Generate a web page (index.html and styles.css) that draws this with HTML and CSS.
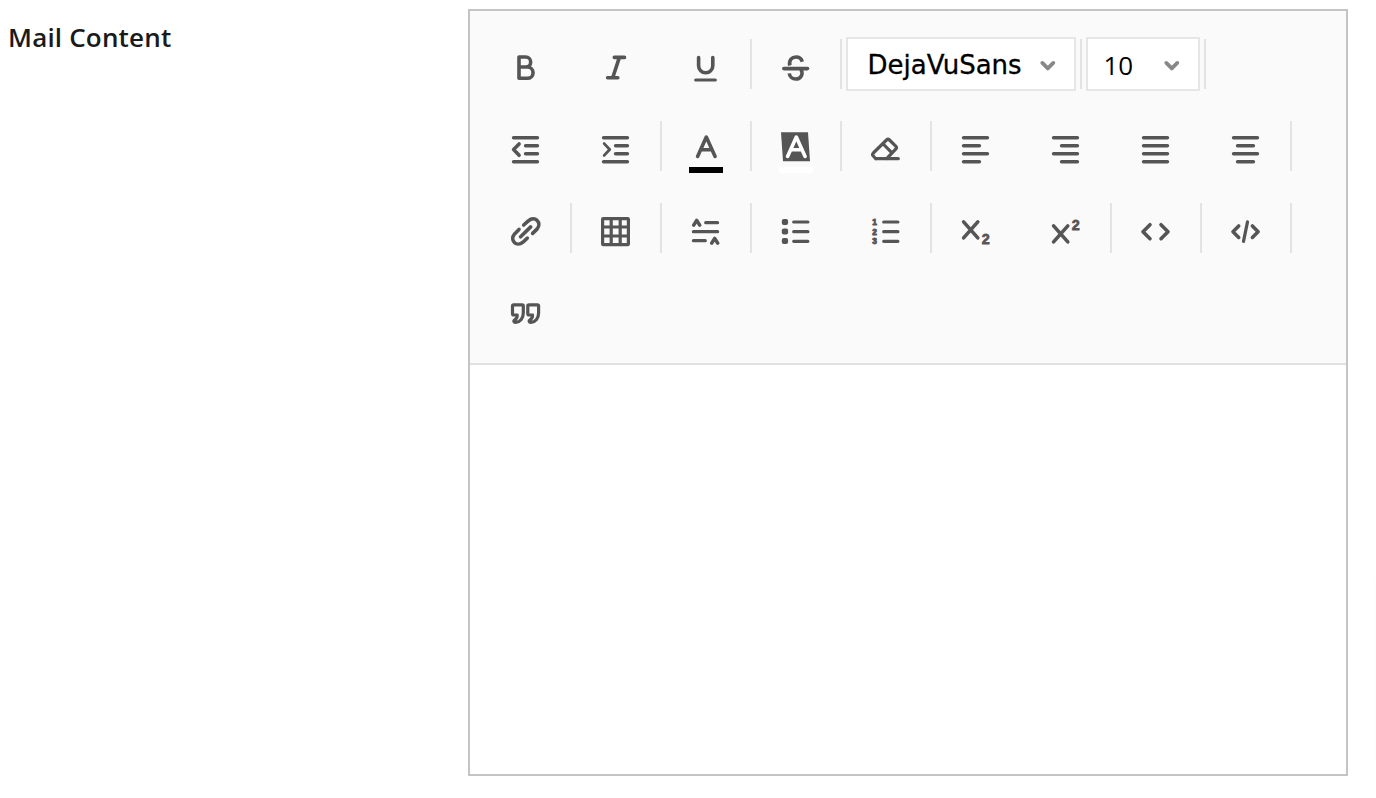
FILE: index.html
```html
<!DOCTYPE html>
<html lang="en">
<head>
<meta charset="utf-8">
<title>Mail Content</title>
<link rel="stylesheet" href="styles.css">
</head>
<body>
<main class="field">
  <label class="field-label">Mail Content</label>
  <section class="editor">
    <div class="toolbar">
      <div class="row">
        <button class="tool"><svg class="icon" viewBox="0 0 40 40"><path d="M14 23h6.7a5 5 0 0 0 0-10H14v21.3h8.4a5.65 5.65 0 0 0 0-11.3"/></svg></button>
        <button class="tool"><svg class="icon" viewBox="0 0 40 40"><path d="M19.3 13.4h10.2M12.6 33.7h10.2M24.4 13.4l-6.7 20.3"/></svg></button>
        <button class="tool"><svg class="icon" viewBox="0 0 40 40"><path d="M13.6 13.5v8.2a7.1 7.1 0 0 0 14.2 0v-8.2"/><path class="thin" d="M10.7 36h19.6"/></svg></button>
        <button class="tool split"><svg class="icon" viewBox="0 0 40 40"><path class="butt" d="M14.800 21.500c-1.200-5.600 2.200-8.500 6.200-8.500 3 0 5.400 1.600 6.300 4.700M25.800 25c3 5.400-.2 10-5 10-3.600 0-6.200-2.200-6.500-5.600"/><path d="M8.800 24.600h23.700"/></svg></button>
        <div class="pick-group split">
          <div class="pick pick-font"><span>DejaVuSans</span><svg class="chevron" viewBox="0 0 16 10"><path d="M2.300 1.900l5.500 5.500 5.500-5.500"/></svg></div>
        </div>
        <div class="pick-group split">
          <div class="pick pick-size"><span>10</span><svg class="chevron" viewBox="0 0 16 10"><path d="M2.300 1.900l5.500 5.500 5.500-5.500"/></svg></div>
        </div>
        <span class="split"></span>
      </div>
      <div class="row">
        <button class="tool"><svg class="icon" viewBox="0 0 40 40"><path d="M8.600 11.700h23.800M20.600 19.700h11.800M20.600 27.700h11.800M8.600 35.700h23.800M14.100 18l-5.500 5.500 5.500 5.800"/></svg></button>
        <button class="tool"><svg class="icon" viewBox="0 0 40 40"><path d="M8.600 11.700h23.800M20.600 19.700h11.800M20.600 27.700h11.800M8.600 35.700h23.800"/><path class="fine" d="M9.200 17.600l5.500 5.900-5.500 5.900"/></svg></button>
        <button class="tool split"><svg class="icon" viewBox="0 0 40 40"><path d="M12.600 30.400l8.700-19.300 8.800 19.300M15.600 23.700h11.500"/><path class="swatch-black" d="M4 41h34v6H4z"/></svg></button>
        <button class="tool split"><svg class="icon" viewBox="0 0 40 40"><path class="solid" d="M6 6.300h27l2 29H8z"/><path class="letter-white" d="M12.600 30.400l8.700-19.300 8.800 19.300M15.600 23.700h11.500"/><path class="swatch-white" d="M4 41h34v6H4z"/></svg></button>
        <button class="tool split"><svg class="icon" viewBox="0 0 40 40"><path class="thin" d="M10.700 32.700h22.600M10.700 32.700l-2.400-2.700q-1.400-1.500 0-3L21.500 14q1.500-1.400 3 0l6.200 6.200q1.500 1.500 0 3L21.700 32.700M18.200 18l8.500 8.700"/></svg></button>
        <button class="tool split"><svg class="icon" viewBox="0 0 40 40"><path d="M8.600 11.700h23.800M8.600 19.700h15.800M8.600 27.700h23.800M8.600 35.700h15.800"/></svg></button>
        <button class="tool"><svg class="icon" viewBox="0 0 40 40"><path d="M8.600 11.700h23.800M16.600 19.700h15.800M8.600 27.700h23.800M16.600 35.700h15.800"/></svg></button>
        <button class="tool"><svg class="icon" viewBox="0 0 40 40"><path d="M8.600 11.700h23.800M8.600 19.700h23.800M8.600 27.700h23.800M8.600 35.700h23.800"/></svg></button>
        <button class="tool"><svg class="icon" viewBox="0 0 40 40"><path d="M8.600 11.700h23.800M12.600 19.700h15.800M8.600 27.700h23.800M12.600 35.700h15.800"/></svg></button>
        <span class="split"></span>
      </div>
      <div class="row">
        <button class="tool"><svg class="icon" viewBox="0 0 40 40"><path d="M18.700 17l4.600-4.200c6.800-5.600 14 2 8.700 8.300L27.600 25.400M15.600 28.800L25.700 18.900M14 21.400l-4.400 4.500c-5.400 6.300 2 13.700 8.300 8.300l4.400-4.100"/></svg></button>
        <button class="tool split"><svg class="icon" viewBox="0 0 40 40"><path class="thin" d="M8.200 10.700h24.600q.6 0 .6.600v24.700q0 .6-.6.600H8.200q-.6 0-.6-.6V11.300q0-.6.600-.6zM16.200 11v25.500M25.200 11v25.500M8 19h25M8 28h25"/></svg></button>
        <button class="tool split"><svg class="icon" viewBox="0 0 40 40"><path class="thin" d="M20.700 14.700h11.900M8.400 23.700h24.200M8.400 32.700h11.900"/><path d="M8.700 17.100l3-4.700 3 4.700M26.700 35.100l3-4.700 3 4.700"/></svg></button>
        <button class="tool split"><svg class="icon" viewBox="0 0 40 40"><path class="thin" d="M18.700 14h14.200M18.700 23.700h14.200M18.700 33.300h14.200"/><g class="solid"><rect x="6.800" y="10.900" width="6.300" height="6" rx="2"/><rect x="6.800" y="20.500" width="6.300" height="6" rx="2"/><rect x="6.800" y="30.100" width="6.300" height="6" rx="2"/></g></svg></button>
        <button class="tool"><svg class="icon" viewBox="0 0 40 40"><path class="thin" d="M18.700 14h14.200M18.700 23.700h14.200M18.700 33.300h14.200"/><text class="list-digit" x="7.300" y="16.700">1</text><text class="list-digit" x="7.300" y="26.600">2</text><text class="list-digit" x="7.300" y="36.200">3</text></svg></button>
        <button class="tool split"><svg class="icon" viewBox="0 0 40 40"><path d="M8.600 13.900l14.200 16M22.800 13.900l-14.200 16"/><text class="script-digit" x="26.700" y="36" textLength="8" lengthAdjust="spacingAndGlyphs">2</text></svg></button>
        <button class="tool"><svg class="icon" viewBox="0 0 40 40"><path d="M8.600 17.900l14.200 16M22.800 17.900l-14.200 16"/><text class="script-digit" x="26.700" y="21.800" textLength="8" lengthAdjust="spacingAndGlyphs">2</text></svg></button>
        <button class="tool split"><svg class="icon" viewBox="0 0 40 40"><path d="M15 16.700l-7 7 7 7M26 16.700l7 7-7 7"/></svg></button>
        <button class="tool split"><svg class="icon" viewBox="0 0 40 40"><path d="M13.700 18l-5.700 5.700 5.700 5.700M27.400 18l5.700 5.700-5.700 5.700"/><path class="thin" d="M22.500 13.900l-4 19.500"/></svg></button>
        <span class="split"></span>
      </div>
      <div class="row">
        <button class="tool"><svg class="icon" viewBox="0 0 40 40"><path class="thin" d="M8.700 14.800h8.400q1.200 0 1.200 1.200v7c0 5-3 9-7.600 9.300-2.200 0-2.400-1.500-1-2.300 1.900-1.100 2.700-2.700 2.500-5H8.700q-1.200 0-1.200-1.200V16q0-1.200 1.200-1.200z"/><path class="thin" d="M24 14.800h8.400q1.200 0 1.200 1.200v7c0 5-3 9-7.600 9.300-2.200 0-2.400-1.500-1-2.300 1.900-1.100 2.700-2.700 2.500-5H24q-1.200 0-1.200-1.200V16q0-1.200 1.200-1.200z"/></svg></button>
      </div>
    </div>
    <div class="content" contenteditable="true"></div>
  </section>
  <div class="edge"></div>
</main>
</body>
</html>
```
FILE: styles.css
```css
* { box-sizing: border-box; }
body {
  margin: 0;
  background: #fff;
  font-family: "Open Sans", "Noto Sans", sans-serif;
  overflow: hidden;
}
.field {
  display: flex;
  width: 1376px;
  height: 798px;
  padding-top: 9px;
}
.field-label {
  flex: 0 0 468px;
  padding: 10px 0 0 8px;
  font-size: 26px;
  line-height: 36px;
  font-weight: 600;
  letter-spacing: .18px;
  color: #1a1a1a;
}
.editor {
  display: flex;
  flex-direction: column;
  flex: 0 0 880px;
  height: 767px;
  border: 2px solid #c4c4c4;
}
.toolbar {
  display: flex;
  flex-direction: column;
  gap: 32px;
  padding: 28px 10px;
  background: #fafafa;
  border-bottom: 2px solid #e1e1e1;
}
.row {
  display: flex;
  align-items: center;
  height: 50px;
}
.content { flex: 1; }
.tool {
  display: flex;
  justify-content: center;
  align-items: center;
  width: 90px;
  height: 50px;
  padding: 0;
  border: 0;
  background: none;
}
.split {
  height: 50px;
  box-shadow: inset 2px 0 #e3e3e3;
}
span.split { width: 2px; }
.icon {
  width: 40px;
  height: 40px;
  overflow: visible;
  fill: none;
  stroke: #555;
  stroke-width: 3.6;
  stroke-linecap: round;
  stroke-linejoin: round;
}
.icon .thin { stroke-width: 3.2; }
.icon .fine { stroke-width: 2.8; }
.icon .butt { stroke-linecap: butt; }
.icon .solid { fill: #555; stroke: none; }
.icon .letter-white { stroke: #fff; }
.icon .swatch-black { fill: #000; stroke: none; }
.icon .swatch-white { fill: #fff; stroke: none; }
.icon text {
  fill: #555;
  stroke: #555;
  font-family: "Liberation Sans", sans-serif;
  font-weight: 700;
}
.list-digit { font-size: 8.4px; stroke-width: .9; }
.script-digit { font-size: 15.5px; stroke-width: .8; }
.pick-group {
  display: flex;
  align-items: center;
  padding: 0 4px 0 6px;
}
.pick {
  display: flex;
  flex: none;
  justify-content: space-between;
  align-items: center;
  height: 54px;
  padding-top: 2px;
  border: 2px solid #e6e6e6;
  background: #fff;
  color: #000;
  font-size: 26px;
  line-height: 36px;
}
.pick-font {
  width: 230px;
  padding-right: 18px;
  padding-left: 19.5px;
  font-family: "DejaVu Sans", sans-serif;
  -webkit-text-stroke: .3px #000;
}
.pick-size {
  width: 114px;
  padding-right: 18px;
  padding-left: 15.5px;
}
.chevron {
  width: 16px;
  height: 10px;
  margin-top: 2px;
  overflow: visible;
  fill: none;
  stroke: #888;
  stroke-width: 3.8;
  stroke-linecap: round;
  stroke-linejoin: round;
}
.edge {
  width: 2px;
  height: 180px;
  margin: 571px 0 0 auto;
  background: #fdfdfd;
}
```
